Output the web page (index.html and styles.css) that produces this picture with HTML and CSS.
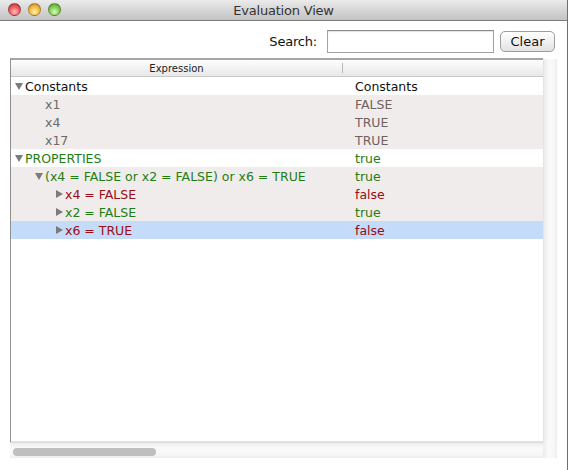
FILE: index.html
```html
<!DOCTYPE html>
<html>
<head>
<meta charset="utf-8">
<link rel="stylesheet" href="styles.css">
</head>
<body>
<div class="window">
  <div class="titlebar">
    <div class="lights">
      <span class="light red"></span>
      <span class="light yellow"></span>
      <span class="light green"></span>
    </div>
    <div class="title">Evaluation View</div>
  </div>
  <div class="toolbar">
    <label class="search-label">Search:</label>
    <div class="search-input"></div>
    <div class="btn">Clear</div>
  </div>
  <div class="table">
    <div class="table-main">
      <div class="content">
        <div class="header">
          <div class="hcell first">Expression</div>
          <div class="hcell second"></div>
        </div>
        <div class="rows">
          <div class="row white">
            <div class="cell expr l0"><span class="tri down"></span><span class="black">Constants</span></div>
            <div class="cell val black">Constants</div>
          </div>
          <div class="row shade">
            <div class="cell expr l1"><span class="tri none"></span><span class="gray">x1</span></div>
            <div class="cell val brown">FALSE</div>
          </div>
          <div class="row shade">
            <div class="cell expr l1"><span class="tri none"></span><span class="gray">x4</span></div>
            <div class="cell val brown">TRUE</div>
          </div>
          <div class="row shade">
            <div class="cell expr l1"><span class="tri none"></span><span class="gray">x17</span></div>
            <div class="cell val brown">TRUE</div>
          </div>
          <div class="row white">
            <div class="cell expr l0"><span class="tri down"></span><span class="green">PROPERTIES</span></div>
            <div class="cell val green">true</div>
          </div>
          <div class="row shade">
            <div class="cell expr l1"><span class="tri down"></span><span class="green">(x4 = FALSE or x2 = FALSE) or x6 = TRUE</span></div>
            <div class="cell val green">true</div>
          </div>
          <div class="row shade">
            <div class="cell expr l2"><span class="tri right"></span><span class="red">x4 = FALSE</span></div>
            <div class="cell val red">false</div>
          </div>
          <div class="row shade">
            <div class="cell expr l2"><span class="tri right"></span><span class="green">x2 = FALSE</span></div>
            <div class="cell val green">true</div>
          </div>
          <div class="row selected">
            <div class="cell expr l2"><span class="tri right"></span><span class="red">x6 = TRUE</span></div>
            <div class="cell val red">false</div>
          </div>
        </div>
      </div>
      <div class="vscroll"></div>
    </div>
    <div class="hscroll-row">
      <div class="hscroll"><div class="thumb"></div></div>
      <div class="corner"></div>
    </div>
  </div>
</div>
</body>
</html>
```
FILE: styles.css
```css
* { box-sizing: border-box; }
html, body {
  margin: 0;
  padding: 0;
  background: #ffffff;
}
body {
  width: 569px;
  height: 470px;
  overflow: hidden;
  font-family: "DejaVu Sans", "Lucida Grande", sans-serif;
  font-size: 12px;
}
.window {
  width: 568px;
  height: 470px;
  border-right: 1px solid #6e6e6e;
  background: #ffffff;
}
.titlebar {
  height: 21px;
  border-bottom: 1px solid #7b7b7b;
  background: linear-gradient(#ebebeb, #d6d6d6 50%, #c3c3c3);
  position: relative;
  display: flex;
  align-items: center;
  justify-content: center;
}
.lights {
  position: absolute;
  left: 8px;
  top: 3px;
  display: flex;
  gap: 7px;
}
.light {
  width: 13px;
  height: 13px;
  border-radius: 50%;
  border: 1px solid rgba(0,0,0,0.3);
}
.light.red { background: radial-gradient(circle at 50% 70%, #ffc2be 0, #f2666b 45%, #c0282d 100%); }
.light.yellow { background: radial-gradient(circle at 50% 70%, #ffefb8 0, #f6c24c 45%, #c2861a 100%); }
.light.green { background: radial-gradient(circle at 50% 70%, #e0f8c6 0, #8bd35a 45%, #4a9526 100%); }
.title {
  font-size: 13px;
  color: #333333;
  letter-spacing: -0.2px;
}
.toolbar {
  height: 37px;
  display: flex;
  justify-content: flex-end;
  align-items: center;
  padding: 3px 12px 0 0;
}
.search-label {
  font-size: 13px;
  color: #111;
  margin-right: 10px;
  letter-spacing: -0.2px;
}
.search-input {
  width: 167px;
  height: 23px;
  border: 1px solid #a2a2a2;
  border-top-color: #8c8c8c;
  box-shadow: inset 0 1px 1px rgba(0,0,0,0.12);
  background: #fff;
  margin-right: 6px;
}
.btn {
  width: 55px;
  height: 21px;
  border: 1px solid #9d9d9d;
  border-radius: 5px;
  background: linear-gradient(#ffffff, #f1f1f1 50%, #e3e3e3);
  font-size: 13px;
  color: #111;
  display: flex;
  align-items: center;
  justify-content: center;
}
.table {
  margin-left: 10px;
  width: 547px;
}
.table-main {
  display: flex;
  height: 384px;
}
.content {
  width: 533px;
  border-left: 1px solid #8f8f8f;
  border-top: 2px solid #a6a6a6;
  display: flex;
  flex-direction: column;
}
.header {
  height: 17px;
  display: flex;
  background: linear-gradient(#fdfdfd, #f1f1f1 60%, #e8e8e8);
  border-bottom: 1px solid #c9c9c9;
  font-size: 10px;
  color: #222;
}
.hcell {
  display: flex;
  align-items: center;
  justify-content: center;
  height: 100%;
}
.hcell.first {
  width: 332px;
  border-right: 1px solid #b8b8b8;
  height: 10px;
  margin-top: 3px;
}
.hcell.second { flex: 1; }
.rows {
  flex: 1;
  background: #ffffff;
  border-bottom: 1px solid #e3e3e3;
}
.row {
  height: 18px;
  display: flex;
  align-items: center;
  font-size: 12.5px;
}
.row.white { background: #ffffff; }
.row.shade { background: #f0eceb; }
.row.selected { background: #c4dbf9; }
.cell.expr {
  width: 343px;
  display: flex;
  align-items: center;
  white-space: nowrap;
}
.cell.val { padding-left: 1px; }
.l0 { padding-left: 3px; }
.l1 { padding-left: 23px; }
.l2 { padding-left: 43px; }
.tri {
  width: 11px;
  height: 10px;
  display: inline-block;
  position: relative;
}
.tri.down::before {
  content: "";
  position: absolute;
  left: 1px;
  top: 2px;
  border-left: 4px solid transparent;
  border-right: 4px solid transparent;
  border-top: 7px solid #7b7b7b;
}
.tri.right::before {
  content: "";
  position: absolute;
  left: 2px;
  top: 1px;
  border-top: 4px solid transparent;
  border-bottom: 4px solid transparent;
  border-left: 7px solid #7b7b7b;
}
.black { color: #111111; }
.gray { color: #6a6a6a; }
.brown { color: #6d6260; }
.green { color: #1f7d14; }
.red { color: #990d14; }
.vscroll {
  width: 14px;
  margin-top: 1px;
  background: linear-gradient(90deg, #ececec, #fafafa 40%, #f6f6f6 80%, #ececec);
  border-left: 1px solid #e4e4e4;
}
.hscroll-row {
  display: flex;
  height: 16px;
}
.hscroll {
  width: 533px;
  background: linear-gradient(#eeeeee, #fafafa 40%, #f6f6f6 80%, #ececec);
  border-top: 1px solid #dcdcdc;
  padding: 5px 0 0 3px;
}
.thumb {
  width: 143px;
  height: 8px;
  border-radius: 4px;
  background: #bfbfbf;
}
.corner {
  width: 14px;
  background: linear-gradient(90deg, #ececec, #fafafa 40%, #f6f6f6 80%, #ececec);
}
```
